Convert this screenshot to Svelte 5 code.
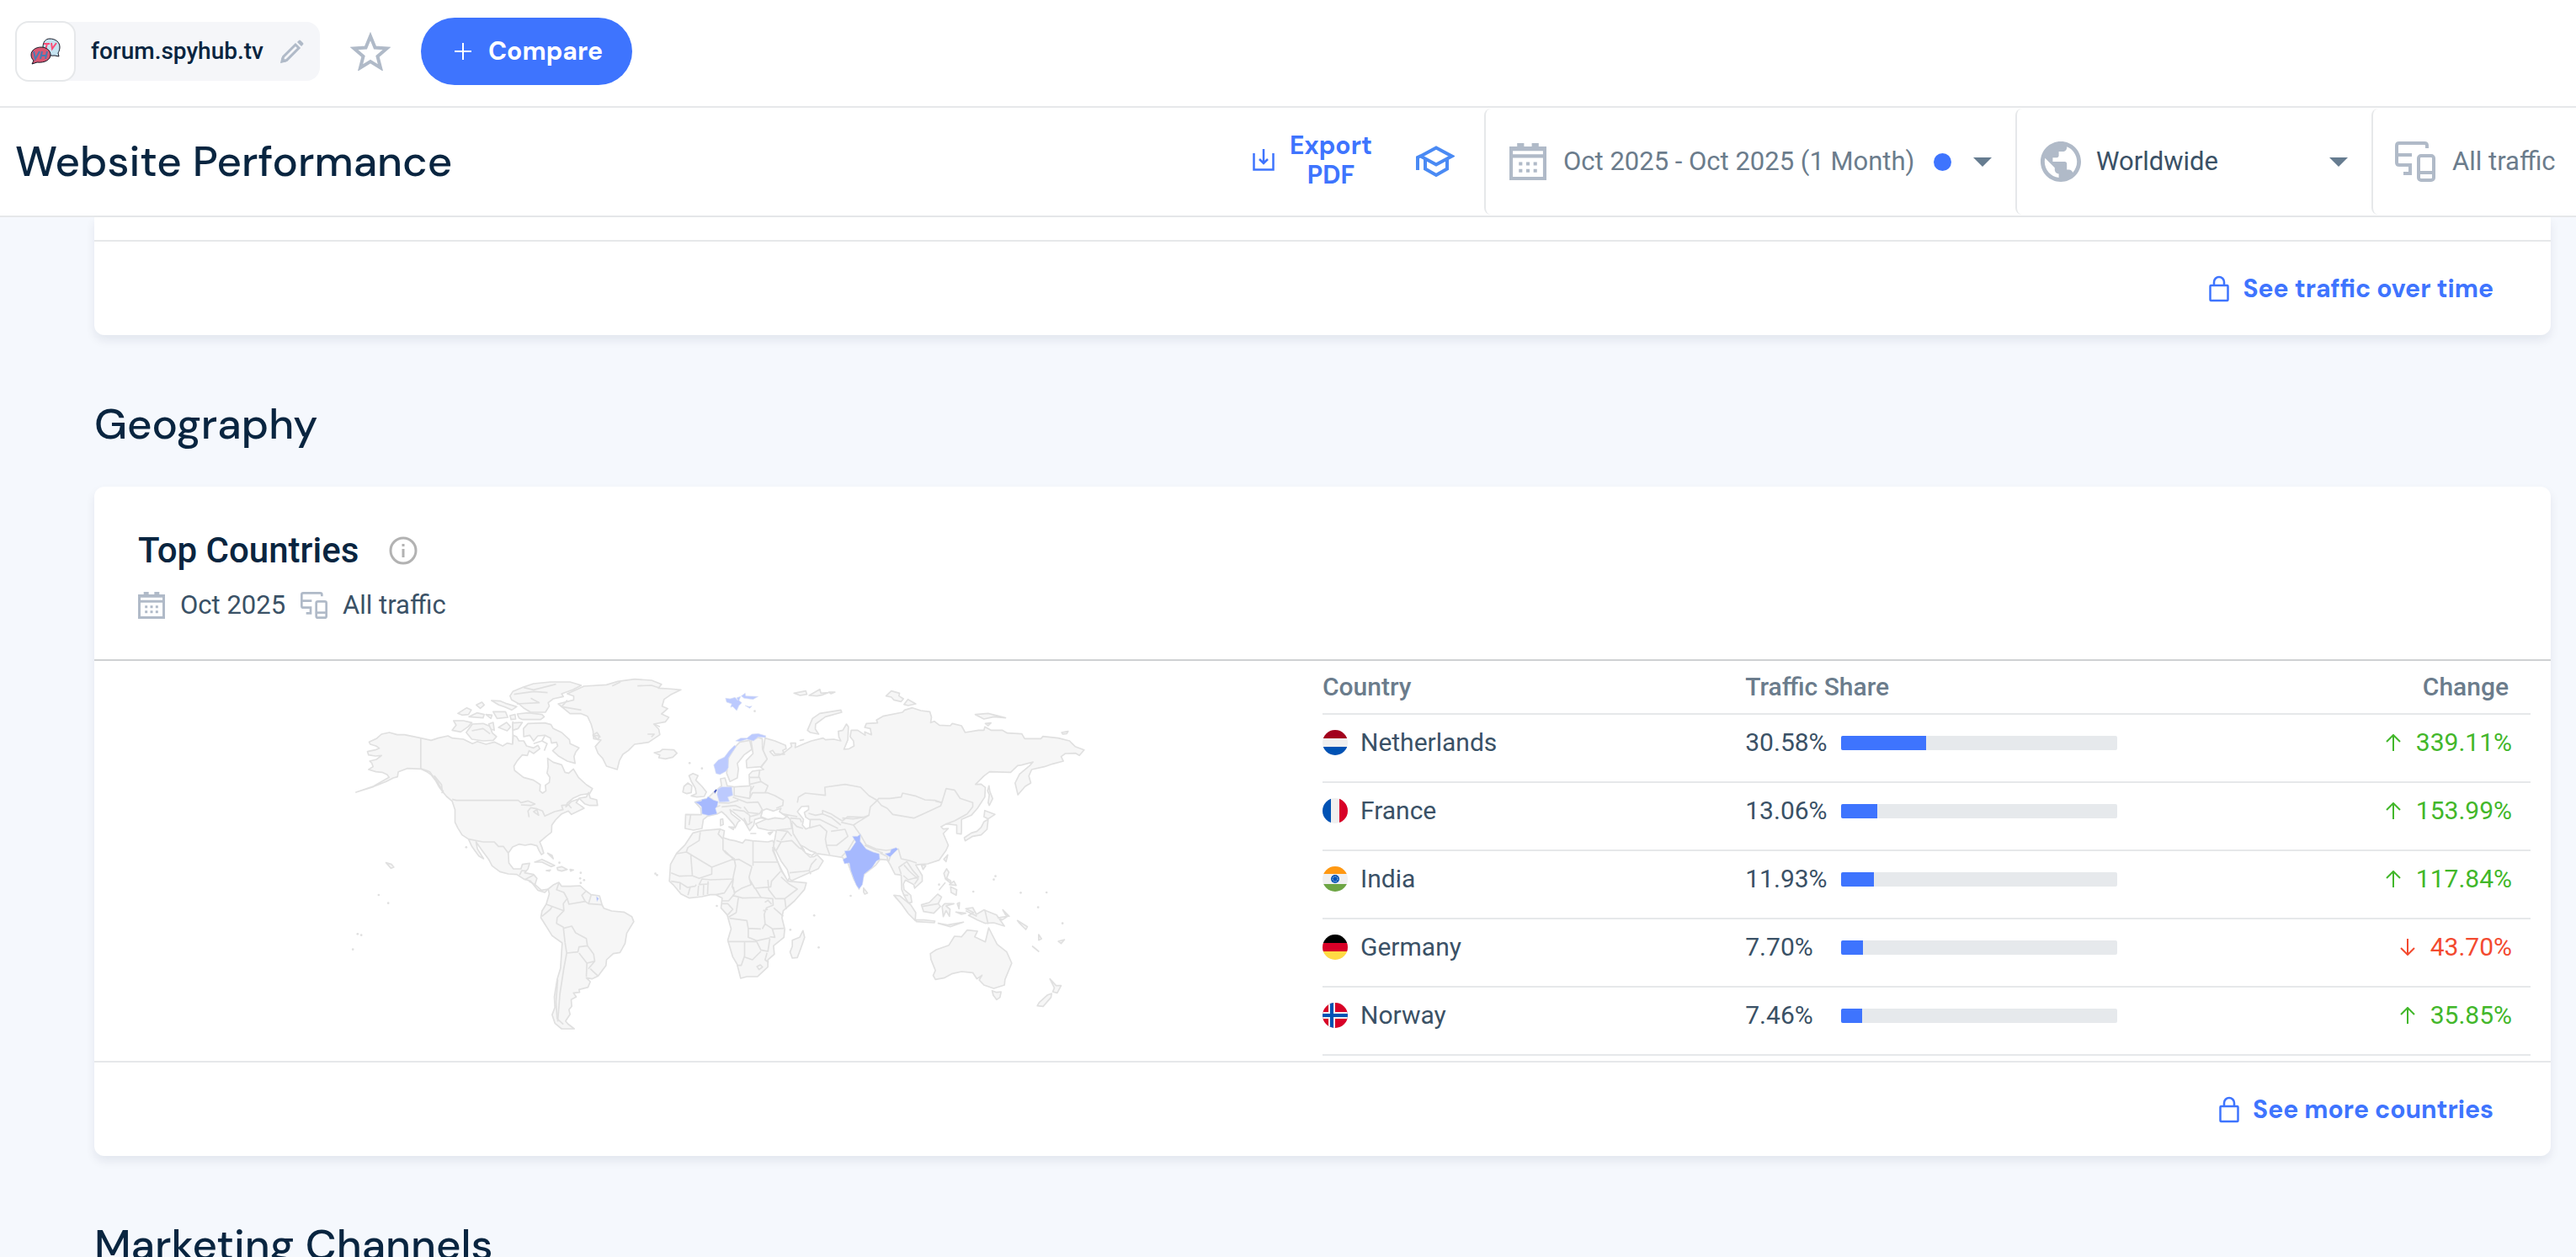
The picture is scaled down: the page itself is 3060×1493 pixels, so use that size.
<script lang="ts">
	interface CountryRow {
		name: string;
		code: string;
		share: number;
		change: number;
	}

	const rows: CountryRow[] = [
		{ name: 'Netherlands', code: 'nl', share: 30.58, change: 339.11 },
		{ name: 'France', code: 'fr', share: 13.06, change: 153.99 },
		{ name: 'India', code: 'in', share: 11.93, change: 117.84 },
		{ name: 'Germany', code: 'de', share: 7.7, change: -43.7 },
		{ name: 'Norway', code: 'no', share: 7.46, change: 35.85 }
	];

	let starred = $state(false);
	let country = $state('Worldwide');
	let traffic = $state('All traffic');

	// western half of the map
	const westLand = [
		'M67 483 L130 461 L185 430 L178 420 L160 412 L138 410 L112 402 L128 392 L124 380 L116 372 L140 366 L158 352 L136 354 L112 350 L108 338 L136 332 L150 326 L138 318 L118 312 L114 304 L140 292 L158 276 L186 270 L214 278 L240 278 L298 290 L335 298 L360 290 L395 282 L410 290 L450 294 L482 310 L500 302 L530 312 L560 304 L590 318 L606 308 L625 312 L628 280 L640 286 L648 300 L665 300 L675 318 L700 325 L716 316 L722 328 L700 345 L684 335 L678 352 L660 350 L642 370 L630 390 L632 405 L664 430 L700 440 L724 456 L722 478 L732 486 L744 478 L742 458 L756 448 L758 430 L748 415 L752 392 L750 362 L770 376 L800 385 L812 412 L825 415 L842 400 L860 430 L888 456 L910 470 L900 488 L868 492 L840 505 L820 522 L815 535 L835 516 L862 506 L852 520 L870 532 L880 540 L835 562 L824 550 L800 560 L778 582 L765 600 L764 625 L745 640 L722 660 L730 680 L736 700 L728 705 L720 692 L712 674 L690 668 L670 672 L648 668 L625 678 L610 700 L612 735 L628 756 L655 756 L660 740 L686 736 L680 756 L668 770 L700 776 L712 790 L705 812 L728 832 L752 828 L740 840 L715 832 L690 800 L665 792 L640 776 L610 774 L580 766 L552 745 L540 722 L520 695 L495 660 L500 685 L522 720 L505 710 L490 690 L480 676 L468 650 L445 635 L430 610 L420 590 L420 545 L410 515 L390 498 L375 480 L364 465 L350 440 L336 422 L320 410 L298 400 L250 398 L218 410 L215 428 L200 432 L175 445 L130 463 Z',
		'M410 262 L424 244 L415 228 L450 228 L480 235 L466 250 L440 268 Z',
		'M460 270 L482 240 L520 238 L545 248 L553 272 L568 285 L556 298 L520 300 L480 294 Z',
		'M575 252 L604 234 L618 250 L606 264 Z M626 236 L660 234 L645 256 L626 262 Z M540 240 L556 234 L560 262 L548 258 Z',
		'M430 202 L462 182 L478 190 L468 206 L445 208 Z M470 214 L498 200 L524 206 L520 218 Z M530 206 L552 208 L548 220 Z M556 196 L600 196 L608 216 L570 220 Z M496 172 L516 162 L524 172 L510 184 Z M550 156 L582 158 L600 166 L640 178 L622 190 L600 180 L576 172 Z M616 210 L634 206 L636 222 L620 224 Z',
		'M642 204 L680 200 L730 206 L738 214 L725 224 L660 224 L648 218 Z',
		'M616 140 L626 124 L664 108 L700 96 L760 90 L830 90 L870 102 L840 118 L800 132 L806 142 L770 150 L752 164 L756 176 L742 198 L690 198 L666 184 L648 168 L622 154 Z',
		'M665 285 L664 256 L680 238 L740 236 L762 242 L770 256 L800 270 L828 296 L830 310 L862 325 L850 340 L844 356 L848 380 L820 372 L790 355 L768 335 L786 318 L782 305 L764 308 L760 290 L740 280 L715 282 L700 300 L686 280 Z',
		'M788 168 L843 154 L843 140 L820 132 L880 105 L960 100 L1000 88 L1060 80 L1120 84 L1156 98 L1145 112 L1180 114 L1225 118 L1188 136 L1165 152 L1158 176 L1178 185 L1156 204 L1182 216 L1170 232 L1128 240 L1146 258 L1150 278 L1110 305 L1060 312 L1038 334 L1018 348 L1006 370 L998 402 L960 390 L946 362 L930 345 L920 320 L940 297 L914 292 L912 265 L905 240 L892 212 L870 203 L830 203 Z',
		'M1130 342 L1150 338 L1160 330 L1200 332 L1211 344 L1196 358 L1170 364 L1146 360 L1150 350 Z',
		'M862 504 L888 500 L896 484 L902 504 L925 510 L928 530 L900 530 L882 524 Z',
		'M704 732 L730 722 L775 744 L762 748 L730 732 Z M784 752 L800 748 L820 758 L800 764 L786 760 Z M830 758 L842 760 L832 764 Z M750 700 L770 720 L766 708 Z M745 762 L760 760 L756 764 Z',
		'M174 734 L194 740 L202 750 L192 754 Z',
		'M752 828 L772 812 L790 804 L800 818 L830 818 L866 816 L886 834 L905 848 L935 852 L944 884 L950 896 L978 906 L1022 910 L1050 926 L1057 944 L1032 985 L1026 1022 L1008 1054 L984 1058 L960 1080 L958 1100 L930 1138 L908 1148 L888 1144 L902 1158 L894 1178 L862 1186 L864 1196 L842 1198 L852 1212 L834 1222 L836 1246 L826 1258 L830 1274 L814 1298 L822 1308 L845 1326 L800 1326 L776 1306 L766 1276 L776 1250 L774 1212 L784 1150 L796 1110 L802 1020 L766 994 L726 930 L730 906 L745 882 L756 845 Z',
		'M1232 482 L1236 462 L1250 450 L1264 460 L1262 484 L1246 488 Z',
		'M1262 496 L1280 488 L1276 468 L1262 444 L1254 424 L1268 416 L1286 424 L1278 440 L1300 462 L1316 482 L1308 498 L1282 500 Z'
	];

	const westBorders = [
		'M298 290 V398 L330 410 L356 446 L378 480 L372 486',
		'M410 508 L425 512 H645 L655 520 L680 514 L705 525 L690 530 L655 528 M684 572 L680 550 L690 538 L712 542 L732 550 L740 568 L775 552 L805 545 L800 530 L825 528 L835 540 M712 545 L718 565 L700 552 Z',
		'M468 650 L520 660 L560 660 L575 676 L592 676 L610 700',
		'M650 778 L658 762 L675 764 M668 795 L700 778 M684 800 L705 812',
		'M790 806 L782 830 L808 840 L820 862 L806 880 L808 905 L745 882 M808 905 L784 930 L782 950 L806 964 L812 1018 M888 834 L872 850 L884 872 L826 882 L820 862 M905 850 L896 880 L944 884 M896 880 L884 872 M730 925 L760 900 L766 890',
		'M806 968 L836 960 L850 984 L888 1004 L892 1030 L862 1034 L858 1052 L818 1056 L812 1018 M892 1030 L914 1060 L918 1085 L890 1092 L862 1056 M890 1092 L888 1140 M902 1112 L930 1138 M918 1085 L895 1112 M818 1056 L808 1110 L794 1200 L786 1300',
		'M630 134 L700 124 L750 128 M640 168 L720 164 L690 148 M665 110 L700 118 L780 98 M480 264 L520 256 L545 275 M1130 240 L1150 250 M1106 276 L1130 276 L1120 286 M1070 104 L1120 102 L1150 112 M1010 90 L980 104 M912 280 L934 282 L930 296 Z M820 155 L800 178 L870 190 M740 282 L730 300 L748 310 L738 335 M626 230 V310 M700 310 L730 300',
		'M340 424 L360 450 L368 470 M346 424 L372 456 L374 474 M786 1150 L780 1230 L784 1290 L806 1310 M910 280 L926 270 L938 288'
	];

	// eastern half of the map
	const eastLand = [
		'M-52 628 L-20 620 L45 614 L60 620 L56 645 L78 652 L98 656 L125 664 L135 652 L160 656 L215 660 L232 655 L240 670 L232 690 L252 735 L262 762 L290 800 L352 806 L345 830 L310 870 L270 905 L265 930 L275 970 L272 1000 L235 1030 L238 1060 L215 1080 L215 1105 L178 1140 L140 1140 L118 1146 L105 1095 L90 1070 L72 1010 L84 970 L70 920 L48 895 L52 860 L30 848 L10 848 L-20 855 L-65 860 L-95 845 L-120 815 L-136 800 L-132 740 L-110 700 L-80 670 Z',
		'M340 976 L346 1000 L332 1040 L320 1072 L302 1074 L294 1052 L302 1032 L302 1010 L328 1000 Z',
		'M205 290 L240 300 L278 316 L280 328 L268 334 L274 348 L240 346 L232 334 L222 338 L236 352 L258 350 L275 340 L300 320 L296 308 L314 308 L312 324 L345 310 L370 300 L412 290 L420 296 L450 294 L475 300 L468 286 L466 266 L482 262 L495 240 L502 250 L500 296 L486 330 L505 328 L522 318 L520 300 L508 285 L512 262 L535 262 L562 280 L560 268 L584 278 L580 256 L560 252 L566 238 L606 236 L602 226 L625 212 L695 198 L702 190 L730 182 L760 192 L792 196 L798 215 L795 235 L808 230 L826 244 L865 246 L872 238 L905 246 L918 270 L965 262 L985 262 L988 250 L1010 262 L1050 262 L1068 272 L1120 275 L1130 292 L1188 292 L1195 284 L1250 290 L1290 300 L1310 320 L1342 332 L1325 352 L1312 344 L1275 345 L1260 356 L1268 372 L1230 382 L1200 392 L1155 402 L1145 425 L1152 450 L1132 462 L1106 492 L1096 450 L1112 418 L1148 388 L1160 375 L1120 386 L1105 388 L1080 412 L1005 410 L985 425 L955 455 L975 454 L990 466 L988 500 L962 540 L940 565 L905 580 L905 620 L904 632 L888 630 L888 600 L850 596 L832 606 L840 614 L858 612 L840 630 L858 672 L850 690 L825 725 L785 738 L760 740 L742 742 L765 780 L765 800 L738 825 L735 812 L705 796 L698 810 L700 830 L724 850 L728 875 L716 878 L700 850 L692 830 L690 778 L668 775 L650 740 L640 724 L615 722 L600 742 L558 775 L540 828 L520 790 L500 735 L480 715 L435 708 L380 700 L345 680 L335 680 L340 690 L365 714 L380 712 L390 705 L412 728 L395 755 L300 798 L290 790 L262 735 L235 675 L245 620 L215 618 L180 610 L172 595 L210 578 L190 574 L168 580 L165 600 L150 620 L130 585 L80 545 L85 560 L116 584 L108 590 L98 610 L94 598 L65 565 L50 552 L35 560 L0 568 L-15 580 L-20 612 L-50 618 L-80 612 L-78 562 L-22 563 L-25 540 L-45 518 L0 505 L20 485 L50 460 L46 435 L62 432 L70 460 L95 464 L150 460 L148 420 L160 408 L200 402 L190 395 L212 365 L198 335 Z',
		'M155 300 L180 288 L195 292 L196 330 L212 365 L190 392 L140 396 L138 370 L162 345 Z',
		'M115 304 L150 298 L158 330 L130 350 L106 380 L110 400 L106 432 L80 445 L68 415 L75 360 L100 320 Z',
		'M475 190 L478 198 L420 214 L385 240 L384 258 L396 276 L366 270 L356 262 L374 220 L400 202 Z',
		'M308 130 L350 122 L354 134 L330 138 Z M362 138 L400 116 L404 130 L430 128 L410 136 L390 140 Z M432 126 L454 126 L440 132 Z',
		'M636 140 L655 122 L684 130 L682 140 L698 150 L690 160 L664 154 L655 144 Z M700 170 L714 152 L742 168 L715 174 Z',
		'M954 206 L1000 202 L1062 218 L1020 214 L985 222 Z M990 238 L1010 236 L1000 246 Z M1262 270 L1285 266 L1280 274 L1266 276 Z M330 298 L342 296 Z',
		'M1003 460 L1006 480 L1016 506 L1004 530 L1000 520 L1004 492 L998 478 Z',
		'M988 548 L1024 562 L1000 578 L985 570 Z M1000 580 L996 615 L975 635 L945 640 L918 656 L915 645 L940 628 L960 622 L975 608 L985 588 Z',
		'M856 706 L850 730 L842 722 Z M762 742 L778 744 L768 758 Z M556 824 L570 842 L560 846 L556 838 Z M46 580 L54 578 L56 598 L46 602 Z M76 606 L94 608 L92 616 Z M154 630 L172 630 Z M216 628 L232 624 L222 634 Z',
		'M852 756 L860 768 L852 790 L866 798 L868 808 L848 792 L842 772 Z M878 800 L886 815 L862 812 Z M866 820 L888 830 L886 850 L868 840 Z M826 830 L846 806 Z',
		'M664 850 L685 852 L724 884 L742 912 L740 940 L715 915 L690 880 Z M740 938 L770 938 L810 942 L808 948 L745 944 Z',
		'M762 884 L790 876 L820 846 L834 856 L822 880 L830 890 L806 914 L770 908 Z',
		'M836 890 L845 880 L878 880 L850 888 L864 900 L862 925 L850 905 L840 926 Z M890 880 L898 876 L896 898 Z M885 910 L920 914 L905 918 Z M822 950 L855 956 L912 946 L865 962 Z',
		'M920 898 L945 894 L958 918 L985 902 L1030 920 L1058 960 L1020 948 L990 950 L962 938 L930 922 L948 912 Z M1035 930 L1070 925 L1050 938 Z M1052 902 L1075 925 L1062 920 Z M1104 940 L1140 962 L1134 972 L1112 950 Z',
		'M794 1058 L815 1044 L860 1028 L880 996 L905 998 L925 974 L962 978 L952 998 L990 1016 L1002 966 L1014 990 L1032 1025 L1066 1052 L1084 1092 L1060 1150 L1058 1170 L1020 1182 L985 1170 L968 1152 L978 1135 L960 1148 L945 1126 L905 1122 L870 1130 L845 1144 L812 1150 L804 1136 L812 1118 L796 1078 Z',
		'M1014 1190 L1030 1196 L1046 1194 L1042 1214 L1030 1222 L1018 1206 Z',
		'M1220 1148 L1242 1172 L1260 1172 L1246 1198 L1230 1194 L1236 1180 Z M1226 1200 L1224 1214 L1196 1246 L1175 1244 L1182 1232 L1212 1205 Z',
		'M1158 1032 L1180 1050 Z M1180 990 L1190 1005 L1180 1010 Z M1250 1014 L1272 1008 L1260 1022 Z'
	];

	const eastBorders = [
		'M-26 625 L-30 655 L-70 680 L-76 696 L-110 702 M-75 696 L15 750 L95 720 L65 700 L55 688 L55 650 L38 632 L45 614 M-60 704 L-54 780 L-100 782 L-130 770 M15 750 L15 775 L-30 790 L-55 780 M95 720 L100 745 L90 792 L10 795 L-20 792 L-30 812 L5 810 M-130 800 L-98 805 L-98 830 M-98 805 L-72 822 L-45 818 L-40 812 M-70 850 L-62 822 M-35 852 L-32 816 M-15 850 L-14 814 M0 846 L2 800',
		'M162 656 V745 M60 690 L95 724 L112 722 L158 748 M162 732 H254 M158 748 L148 785 L155 812 L120 826 L98 840 L88 820 L92 790 M148 790 L168 825 L225 820 L228 800 L260 765 M215 795 L218 830 L242 862 L275 862 L320 828 L290 810 L262 785 M90 795 L60 842 L30 848 M88 850 L125 860 L190 858 L170 825 M92 820 L96 845 L75 870 L52 870 M110 858 L102 912 L75 928',
		'M190 858 L232 862 L234 885 L210 895 L202 918 L205 952 L195 970 M275 862 L280 900 M236 895 L270 925 M198 905 L215 900 M78 932 L140 940 L145 968 L190 970 M205 952 L232 970 L272 968 M230 968 L240 1000 L222 998 M145 970 V1000 L175 1012 L222 1002 M72 1015 L175 1015 L190 1045 L215 1050 L222 1005 M132 1018 V1066 L120 1100 L105 1100 M132 1070 L160 1080 L190 1050 M212 1055 L205 1080 L218 1090 M176 1104 L188 1098 L196 1106 L184 1115 Z M204 875 L216 868 L228 882 M50 880 H72 L90 900 L72 920',
		'M320 520 L324 500 L348 486 L420 494 L418 465 L490 455 L545 465 L575 495 L605 512 L580 535 L575 565 L555 572 L500 570 L480 585 L455 570 L440 560 L410 548 L410 560 L385 565 L360 558 M605 512 L610 505 L650 505 L690 500 L695 486 L740 496 L775 510 L810 512 L835 520 L830 532 L780 555 L735 575 L660 562 L640 540 L620 530 Z M812 515 L835 520 L850 470 L880 475 L900 505 L945 520 L945 535 L925 560 L880 585 L850 596',
		'M575 565 L535 590 L520 600 L548 640 L565 670 L600 685 L635 690 L680 685 L690 720 L725 728 L745 735 M300 585 L318 605 L340 612 M362 610 L400 600 L425 622 L420 650 L425 678 L435 705 M300 590 L305 630 L330 670 L345 690 M425 672 L460 672 L500 640 L490 615 L440 622 M365 580 L400 580 L440 600 L465 612 M410 560 L440 572 L475 600 M480 575 L520 578 L555 572 M476 590 L520 600',
		'M245 655 L262 660 L300 655 L325 680 L345 690 M245 690 L262 660 M248 618 L285 622 L262 655 M285 622 L300 640 M292 770 L340 765 L362 762 L370 740 L388 720 M362 762 L368 775 M530 640 L500 690 L478 712 M645 730 L652 710 M690 775 L682 750 L710 730 L730 760 L752 785 L715 795 L698 780 M700 742 L720 765 L748 790 M738 810 L752 790 M560 672 L600 690 L625 700 M615 700 L640 712 L642 728',
		'M280 565 L295 580 L300 612 L245 618 M295 575 L330 578 L335 590 M265 560 L320 570 M95 464 L95 495 L150 505 L155 460 M150 505 L160 485 L215 485 L240 495 L270 512 L268 530 L245 540 M90 500 L140 520 L180 518 L195 545 L185 560 L145 555 L130 535 M40 520 L75 522 L110 512 M50 535 L100 530 L120 540 M90 545 L130 550 L150 565 L150 590 M150 570 L180 562 M130 575 L142 600 L160 588 M150 430 L185 430 L190 445 L215 460 L205 485 M150 455 L190 445 M186 405 L182 430 M150 485 L165 460 M20 540 L45 530 M-60 562 L-66 600 M988 902 L1000 952 M765 890 L822 880 M700 850 L715 850 M920 905 L960 925 M0 500 L20 510'
	];

	const seas = [
		'M190 570 L196 548 L210 542 L235 550 L262 540 L256 552 L282 570 L270 578 L240 574 L215 580 Z',
		'M320 552 L335 534 L360 532 L360 545 L345 555 L350 572 L366 582 L364 608 L350 614 L338 600 L342 580 Z',
		'M332 672 L345 678 L365 692 L385 698 L372 708 L350 700 Z',
		'M232 680 L244 692 L262 728 L284 758 L292 786 L286 800 L268 768 L250 730 Z'
	];

	// x, y of islands too small for an outline
	const islets = [
		[148, 849], [182, 878], [73, 988], [86, 992], [56, 1043], [460, 679], [792, 734], [868, 770], [866, 790],
		[880, 796], [868, 806], [1134, 773], [1140, 778], [1256, 379], [1300, 398], [1353, 888], [1830, 852], [1700, 922],
		[1615, 973], [1716, 1036], [2145, 812], [2267, 837], [2346, 782], [2340, 794], [2436, 841], [2528, 840],
		[2498, 893], [2585, 950], [1488, 194]
	];
</script>

{#snippet calendar()}
	<svg class="icon" viewBox="0 0 43 43" fill="currentColor" aria-hidden="true">
		<path fill-rule="evenodd" d="M9 0h8v4h9V0h8v4h9v39H0V4h9zM4 9v4h35V9zM4 17v22h35V17z" />
		<path d="M11 22h4v4h-4zM19.500 22h4v4h-4zM28 22h4v4h-4zM11 30h4v4h-4zM19.500 30h4v4h-4zM28 30h4v4h-4z" />
	</svg>
{/snippet}

{#snippet devices()}
	<svg class="icon" viewBox="0 0 24 24" fill="none" stroke="currentColor" stroke-width="2" aria-hidden="true">
		<path d="M19 4V2.500Q19 1 17.500 1H2.500Q1 1 1 2.500V12.500Q1 14 2.500 14H9V19M1 8H10M5 19H10" />
		<rect x="14" y="8.500" width="9" height="14.500" rx="1.500" />
		<path d="M14 18.500h9" />
	</svg>
{/snippet}

{#snippet lock()}
	<svg class="lock" viewBox="0 0 24 32" fill="none" stroke="currentColor" stroke-width="2.500" aria-hidden="true">
		<rect x="1.500" y="12" width="21" height="18" rx="1" />
		<path d="M6 12V8a6 6 0 0 1 12 0v4" />
	</svg>
{/snippet}

{#snippet flag(code: string)}
	<svg class="flag" viewBox="0 0 30 30" aria-hidden="true">
		<g clip-path="url(#flag-circle)">
			<rect width="30" height="30" fill="#f0f0f0" />
			{#if code === 'nl'}
				<rect width="30" height="10" fill="#a2001d" />
				<rect y="20" width="30" height="10" fill="#0052b4" />
			{:else if code === 'fr'}
				<rect width="10" height="30" fill="#0052b4" />
				<rect x="20" width="10" height="30" fill="#d80027" />
			{:else if code === 'in'}
				<rect width="30" height="9" fill="#ff9811" />
				<rect y="21" width="30" height="9" fill="#6da544" />
				<circle cx="15" cy="15" r="5" fill="#0052b4" />
				<circle cx="15" cy="15" r="3" fill="none" stroke="#f0f0f0" stroke-dasharray="1 1" />
			{:else if code === 'de'}
				<rect width="30" height="10" fill="#000" />
				<rect y="10" width="30" height="10" fill="#d80027" />
				<rect y="20" width="30" height="10" fill="#ffda44" />
			{:else}
				<rect width="30" height="30" fill="#d80027" />
				<path d="M11 0V30M0 15H30" stroke="#f0f0f0" stroke-width="8" />
				<path d="M11 0V30M0 15H30" stroke="#0052b4" stroke-width="4" />
			{/if}
		</g>
	</svg>
{/snippet}

<div class="page">
	<header>
		<div class="topbar">
			<div class="site">
				<span class="favicon">
					<svg viewBox="0 0 36 32" aria-hidden="true">
						<path d="M23 1C30 1 35 5 35 11c0 3-1 5-2 7l1 4-5-1c-8 1-14-3-14-10C15 5 18 1 23 1z" fill="#c5e3f1" stroke="#171827" stroke-width="1" />
						<path d="M16 7h7M20 7l-2 7M25 6l1 7 5-7" fill="none" stroke="#ff4d78" stroke-width="2" />
						<path d="M13 11C6 11 1 15 1 20c0 3 1 5 3 7l-2 4 6-2c9 1 16-3 16-9 0-5-5-9-11-9z" fill="#d95873" stroke="#171827" stroke-width="1" />
						<path d="M4 16l2 9 5-9M12 25l2-9M18 25l2-9M13 21h6" fill="none" stroke="#477cb4" stroke-width="2" />
					</svg>
				</span>
				<span class="domain">forum.spyhub.tv</span>
				<button class="plain" aria-label="Edit website">
					<svg class="pencil" viewBox="0 0 28 28" aria-hidden="true">
						<path d="M20 3l5 5 2-2q1-1 0-2l-3-3q-1-1-2 0z" fill="#b0bac8" />
						<path d="M2.500 25.500l1-5L18 6l4 4L7.500 24.500z" fill="none" stroke="#b0bac8" stroke-width="3" />
						<path d="M0 28l1.500-7 5.500 5.500z" fill="#b0bac8" />
					</svg>
				</button>
			</div>
			<button class="plain star" aria-label="Add to favorites" aria-pressed={starred} onclick={() => (starred = !starred)}>
				<svg viewBox="0 0 48 46" aria-hidden="true">
					<path d="M24 5l5.500 13.500 14 1-11 9.500 3.500 13.500-12-7.500-12 7.500 3.500-13.500-11-9.500 14-1z" fill={starred ? '#b0bac8' : 'none'} stroke="#b0bac8" stroke-width="4" />
				</svg>
			</button>
			<button class="compare">
				<svg viewBox="0 0 20 20" aria-hidden="true"><path d="M10 0V20M0 10H20" stroke="#fff" stroke-width="2" /></svg>
				Compare
			</button>
		</div>

		<div class="toolbar">
			<h1>Website Performance</h1>
			<button class="plain export">
				<svg viewBox="0 0 26 26" fill="none" stroke="currentColor" stroke-width="2.500" aria-hidden="true">
					<path d="M1.500 5V24.500H24.500V5M13 0V17M8 12l5 5 5-5" />
				</svg>
				<span>Export PDF</span>
			</button>
			<button class="plain learn" aria-label="Academy">
				<svg viewBox="0 0 46 38" fill="none" stroke="#4a8af4" stroke-width="4" aria-hidden="true">
					<path d="M5.500 12.500L24 2.500l18.500 10L24 22.500zM11 16V27.500l13 7.500 13-7.500V16M2 29V14l4-2" />
				</svg>
			</button>
			<button class="filter dates">
				{@render calendar()}
				<span>Oct 2025 - Oct 2025 (1 Month)</span>
				<span class="dot"></span>
				<span class="caret"></span>
			</button>
			<label class="filter region">
				<svg class="icon" viewBox="2 2 20 20" fill="currentColor" aria-hidden="true">
					<path d="M12 2C6.480 2 2 6.480 2 12s4.480 10 10 10 10-4.480 10-10S17.520 2 12 2zm-1 17.930c-3.950-.49-7-3.850-7-7.930 0-.62.080-1.210.21-1.790L9 15v1c0 1.100.9 2 2 2v1.930zm6.900-2.540c-.26-.81-1-1.390-1.900-1.390h-1v-3c0-.55-.45-1-1-1H8v-2h2c.55 0 1-.45 1-1V7h2c1.100 0 2-.9 2-2v-.41c2.930 1.190 5 4.060 5 7.410 0 2.080-.8 3.970-2.100 5.390z" />
				</svg>
				<select bind:value={country} aria-label="Country">
					<option>Worldwide</option>
				</select>
				<span class="caret"></span>
			</label>
			<label class="filter traffic">
				{@render devices()}
				<select bind:value={traffic} aria-label="Traffic source">
					<option>All traffic</option>
				</select>
			</label>
		</div>
	</header>

	<main>
		<section class="card previous">
			<div class="card-footer">
				<a href="#traffic">{@render lock()}See traffic over time</a>
			</div>
		</section>

		<h2>Geography</h2>

		<section class="card">
			<div class="card-header">
				<h3>
					Top Countries
					<svg class="info" viewBox="0 0 34 34" fill="none" stroke="#b2b2b2" stroke-width="3" aria-hidden="true">
						<circle cx="17" cy="17" r="15" />
						<path d="M17 15V25M17 9V12" />
					</svg>
				</h3>
				<div class="meta">
					{@render calendar()}
					<span>Oct 2025</span>
					{@render devices()}
					<span>All traffic</span>
				</div>
			</div>

			<div class="card-body">
				<svg class="map" viewBox="-27 15 2700 1425" role="img" aria-label="Traffic by country">
					<g class="land">
						{#each westLand as d (d)}<path {d} />{/each}
					</g>
					<g class="land" transform="translate(1320 0)">
						{#each eastLand as d (d)}<path {d} />{/each}
						{#each seas as d (d)}<path class="sea" {d} />{/each}
					</g>
					<g class="borders">
						{#each westBorders as d (d)}<path {d} />{/each}
					</g>
					<g class="borders" transform="translate(1320 0)">
						{#each eastBorders as d (d)}<path {d} />{/each}
					</g>
					{#each islets as [x, y] (`${x}-${y}`)}
						<circle cx={x} cy={y} r="4" fill="#e0e0e0" />
					{/each}
					<g class="visits" transform="translate(1320 0)">
						<path class="low" d="M22 386 L38 368 L60 358 L78 334 L96 316 L102 320 L84 346 L74 362 L74 395 L66 408 L44 420 L30 416 L26 400 Z M100 300 L118 290 L140 290 L158 276 L180 274 L208 282 L206 288 L180 286 L164 300 L140 294 L115 302 Z" />
						<path class="low" d="M64 148 L80 150 L98 145 L108 156 L104 146 L118 142 L112 156 L122 164 L112 174 L104 192 L90 178 L82 180 L86 168 L68 162 Z M120 140 L134 130 L136 140 L180 142 L162 152 L130 148 Z M134 174 L148 178 L158 176 L150 184 Z" />
						<path class="low" d="M36 472 L50 464 L86 464 L90 494 L72 500 L78 516 L42 518 L34 492 Z" />
						<path class="mid" d="M-46 518 L-22 514 L-20 508 L-4 506 L2 498 L20 510 L38 516 L34 534 L28 540 L34 560 L4 566 L-20 560 L-22 534 L-34 524 Z M-396 854 L-388 862 L-394 872 Z" />
						<path class="mid" d="M516 640 L534 640 L545 632 L544 658 L565 685 L590 696 L612 702 L614 722 L602 728 L586 752 L558 775 L552 812 L540 828 L530 814 L522 795 L510 762 L505 735 L488 738 L482 722 L496 715 L488 692 L508 690 L528 660 Z M632 702 L650 698 L654 686 L672 680 L678 686 L664 700 L650 714 Z" />
						<path class="high" d="M22 480 L30 472 L34 476 L26 488 Z" />
					</g>
				</svg>

				<div class="table-wrap">
					<table>
						<colgroup>
							<col class="col-country" />
							<col class="col-share" />
							<col />
						</colgroup>
						<thead>
							<tr>
								<th>Country</th>
								<th>Traffic Share</th>
								<th class="change">Change</th>
							</tr>
						</thead>
						<tbody>
							{#each rows as row (row.code)}
								<tr>
									<td>
										<div class="cell">{@render flag(row.code)}{row.name}</div>
									</td>
									<td>
										<div class="cell">
											<span class="share">{row.share.toFixed(2)}%</span>
											<span class="bar"><span class="fill" style="width: {row.share}%"></span></span>
										</div>
									</td>
									<td>
										<div class="cell delta" class:down={row.change < 0}>
											<svg viewBox="0 0 18 20" fill="none" stroke="currentColor" stroke-width="2" aria-hidden="true">
												<path d={row.change < 0 ? 'M9 0V19M1 11l8 8 8-8' : 'M9 20V1M1 9l8-8 8 8'} />
											</svg>
											{Math.abs(row.change).toFixed(2)}%
										</div>
									</td>
								</tr>
							{/each}
						</tbody>
					</table>
				</div>
			</div>

			<div class="card-footer">
				<a href="#countries">{@render lock()}See more countries</a>
			</div>
		</section>

		<h2>Marketing Channels</h2>
	</main>

	<svg class="defs" aria-hidden="true">
		<clipPath id="flag-circle"><circle cx="15" cy="15" r="15" /></clipPath>
	</svg>
</div>

<style>
	:global(body) {
		margin: 0;
		background: #f5f8fd;
	}

	.page {
		height: 100vh;
		overflow: hidden;
		background: #f5f8fd;
		color: #3a5166;
		font-family: Roboto, sans-serif;
		font-size: 30px;
		line-height: 36px;
	}

	button,
	select {
		border: 0;
		padding: 0;
		background: none;
		color: inherit;
		font: inherit;
		cursor: pointer;
	}

	.plain {
		display: flex;
		align-items: center;
	}

	header {
		background: #fff;
	}

	.topbar {
		display: flex;
		align-items: center;
		box-sizing: border-box;
		height: 128px;
		padding: 0 18px 4px;
		border-bottom: 2px solid #e6e8ea;
	}

	.site {
		display: flex;
		align-items: center;
		height: 70px;
		padding-right: 19px;
		border-radius: 16px;
		background: #f5f6f9;
		color: #092540;
	}

	.favicon {
		display: grid;
		place-items: center;
		box-sizing: border-box;
		width: 72px;
		height: 72px;
		margin-right: 18px;
		border: 2px solid #e6e8ea;
		border-radius: 16px;
		background: #fff;
	}

	.favicon svg {
		width: 36px;
		height: 32px;
	}

	.domain {
		margin-right: 20px;
		font-size: 28px;
		font-weight: 500;
	}

	.pencil {
		width: 28px;
		height: 28px;
	}

	.star {
		margin: 0 36px;
	}

	.star svg {
		width: 48px;
		height: 46px;
	}

	.compare {
		display: flex;
		align-items: center;
		gap: 20px;
		height: 80px;
		padding: 0 35px 0 40px;
		border-radius: 40px;
		background: #3e74fe;
		color: #fff;
		font-family: 'DM Sans', Inter, sans-serif;
		font-weight: 700;
	}

	.compare svg {
		width: 20px;
		height: 20px;
	}

	.toolbar {
		display: flex;
		align-items: center;
		height: 128px;
		padding-left: 18px;
		border-bottom: 2px solid #e6e8ea;
	}

	h1,
	h2 {
		margin: 0;
		color: #092540;
		font-family: 'DM Sans', Inter, sans-serif;
		font-size: 51px;
		font-weight: 500;
		line-height: 64px;
	}

	h1 {
		margin-right: auto;
	}

	.export {
		gap: 16px;
		width: 144px;
		margin-right: 50px;
		padding-bottom: 5px;
		color: #3e74fe;
		font-family: 'DM Sans', Inter, sans-serif;
		font-size: 30px;
		font-weight: 700;
		line-height: 35px;
	}

	.export svg {
		flex: none;
		width: 26px;
		height: 26px;
	}

	.learn {
		margin-right: 35px;
	}

	.learn svg {
		width: 46px;
		height: 38px;
	}

	.filter {
		display: flex;
		align-items: center;
		box-sizing: border-box;
		height: 126px;
		border-left: 2px solid #e6e8ea;
		border-radius: 8px 0 0 8px;
		color: #6b7c8c;
		font-size: 31px;
	}

	.filter select {
		flex: 1;
		appearance: none;
	}

	.icon {
		flex: none;
		width: 44px;
		height: 44px;
		color: #b0bac8;
	}

	.dates {
		width: 631px;
		padding: 0 28px;
		gap: 20px;
		white-space: nowrap;
	}

	.dates span:first-of-type {
		flex: 1;
		text-align: left;
	}

	.dot {
		width: 21px;
		height: 21px;
		border-radius: 50%;
		background: #3e74fe;
	}

	.caret {
		border: 11px solid transparent;
		border-top-color: #667c90;
		border-bottom: 0;
	}

	.dates .caret {
		margin-left: 6px;
	}

	.region {
		width: 423px;
		padding: 0 28px;
		gap: 18px;
	}

	.region .icon,
	.traffic .icon {
		width: 48px;
		height: 48px;
	}

	.region select {
		color: #3a5166;
	}

	.traffic {
		width: 243px;
		padding-left: 26px;
		gap: 20px;
	}

	main {
		padding: 0 30px 0 112px;
	}

	.card {
		border-radius: 12px;
		background: #fff;
		box-shadow: 0 6px 12px rgba(14, 30, 62, 0.08);
	}

	.previous {
		padding-top: 27px;
		border-radius: 0 0 12px 12px;
	}

	.card-footer {
		display: flex;
		justify-content: flex-end;
		align-items: center;
		height: 111px;
		padding-right: 68px;
		border-top: 2px solid #e6e8ea;
	}

	.card-footer a {
		display: flex;
		align-items: center;
		gap: 16px;
		color: #3e74fe;
		font-family: 'DM Sans', Inter, sans-serif;
		font-weight: 700;
		text-decoration: none;
	}

	.lock {
		width: 24px;
		height: 32px;
	}

	h2 {
		padding: 74px 0 42px;
	}

	.card-header {
		padding: 50px 52px 46px;
		border-bottom: 2px solid #cfd1d3;
	}

	h3 {
		display: flex;
		align-items: center;
		gap: 36px;
		margin: 0 0 21px;
		color: #092540;
		font-size: 42px;
		font-weight: 500;
		line-height: 52px;
	}

	.info {
		width: 34px;
		height: 34px;
	}

	.meta {
		display: flex;
		align-items: center;
		gap: 18px;
		font-size: 31px;
	}

	.meta .icon {
		width: 32px;
		height: 32px;
	}

	.card-body {
		display: grid;
		grid-template-columns: 1fr 1fr;
	}

	.map {
		width: 100%;
		height: 475px;
	}

	.land {
		fill: #f6f6f6;
		stroke: #e0e0e0;
		stroke-width: 5;
		stroke-linejoin: round;
	}

	.sea {
		fill: #fff;
	}

	.borders {
		fill: none;
		stroke: #e0e0e0;
		stroke-width: 5;
		stroke-linejoin: round;
	}

	.visits {
		stroke: #dbe1f5;
		stroke-width: 2;
	}

	.low {
		fill: #bccafe;
	}

	.mid {
		fill: #a6b9fe;
	}

	.high {
		fill: #3c50b8;
	}

	.table-wrap {
		padding-right: 24px;
	}

	table {
		width: 100%;
		table-layout: fixed;
		border-collapse: separate;
		border-spacing: 0;
	}

	.col-country {
		width: 35%;
	}

	.col-share {
		width: 45%;
	}

	th,
	td {
		box-sizing: border-box;
		padding: 0;
		border-bottom: 2px solid #e6e8ea;
		text-align: left;
		vertical-align: top;
	}

	th {
		height: 64px;
		padding-top: 13px;
		color: #6b7c8c;
		font-weight: 500;
	}

	th.change {
		padding-right: 26px;
		text-align: right;
	}

	td {
		height: 81px;
		padding-top: 15px;
	}

	.cell {
		display: flex;
		align-items: center;
	}

	.flag {
		width: 30px;
		height: 30px;
		margin-right: 15px;
	}

	.share {
		width: 114px;
	}

	.bar {
		width: 328px;
		height: 17px;
		border-radius: 2px;
		overflow: hidden;
		background: #e6e9ec;
	}

	.fill {
		display: block;
		height: 100%;
		background: #3e74fe;
	}

	.delta {
		justify-content: flex-end;
		gap: 18px;
		padding-right: 22px;
		color: #42b72a;
	}

	.delta.down {
		color: #f34a2f;
	}

	.delta svg {
		width: 18px;
		height: 20px;
	}

	.defs {
		display: block;
		width: 0;
		height: 0;
	}
</style>
